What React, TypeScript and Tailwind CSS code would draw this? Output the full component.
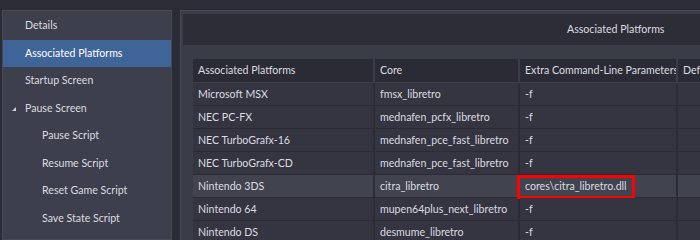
import React from 'react';

const sidebar = [
  { label: 'Details', indent: false },
  { label: 'Associated Platforms', indent: false, active: true },
  { label: 'Startup Screen', indent: false },
  { label: 'Pause Screen', indent: false, expanded: true },
  { label: 'Pause Script', indent: true },
  { label: 'Resume Script', indent: true },
  { label: 'Reset Game Script', indent: true },
  { label: 'Save State Script', indent: true },
];

const rows = [
  { platform: 'Microsoft MSX', core: 'fmsx_libretro', params: '-f' },
  { platform: 'NEC PC-FX', core: 'mednafen_pcfx_libretro', params: '-f' },
  { platform: 'NEC TurboGrafx-16', core: 'mednafen_pce_fast_libretro', params: '-f' },
  { platform: 'NEC TurboGrafx-CD', core: 'mednafen_pce_fast_libretro', params: '-f' },
  { platform: 'Nintendo 3DS', core: 'citra_libretro', params: 'cores\\citra_libretro.dll', marked: true },
  { platform: 'Nintendo 64', core: 'mupen64plus_next_libretro', params: '-f' },
  { platform: 'Nintendo DS', core: 'desmume_libretro', params: '-f' },
];

export default function App() {
  return (
    <div
      className="flex h-[240px] w-[700px] overflow-hidden bg-[#2b2c36] pt-[10px] pl-[2px] text-[10.6px] text-[#dcdce0]"
      style={{ fontFamily: 'Lato, "Open Sans", sans-serif' }}
    >
      {/* left nav */}
      <nav className="w-[170px] shrink-0 border border-[#474957] bg-[#3d3f4c] pt-[1px]">
        {sidebar.map((item) => (
          <div
            key={item.label}
            className={`relative flex h-[27.5px] items-center whitespace-nowrap pt-[1px] ${item.indent ? 'pl-[39px]' : 'pl-[22px]'} ${item.active ? 'bg-[#3f6598] text-white' : ''}`}
          >
            {item.expanded && (
              <span className="absolute left-[9px] top-[12px] h-0 w-0 border-b-[4px] border-l-[4px] border-b-[#cfd0d6] border-l-transparent" />
            )}
            {item.label}
          </div>
        ))}
      </nav>

      {/* main panel */}
      <main className="ml-[8px] flex-1 overflow-hidden border-t border-l border-[#474957] bg-[#3a3c48] pt-[3px] pl-[2px]">
        <div className="flex h-[31px] items-center bg-[#2c2d37] pl-[384px] whitespace-nowrap">
          Associated Platforms
        </div>
        <div className="mt-[14px] ml-[10px]">
          <div className="grid grid-cols-[182px_145px_158px_40px] whitespace-nowrap">
            {['Associated Platforms', 'Core', 'Extra Command-Line Parameters', 'Default'].map((h) => (
              <div
                key={h}
                className="flex h-[24px] items-center overflow-hidden border-r-2 border-b border-[#3a3c48] bg-[#2a2b35] pt-[1px] pl-[5px]"
              >
                {h}
              </div>
            ))}
            {rows.map((r) => {
              const bg = r.marked ? 'bg-[#41434f]' : 'bg-[#343541]';
              return (
                <React.Fragment key={r.platform}>
                  <div className={`flex h-[23px] items-center overflow-hidden border-r-2 border-b border-[#2b2c36] pt-[1px] pl-[5px] ${bg}`}>
                    {r.platform}
                  </div>
                  <div className={`flex h-[23px] items-center overflow-hidden border-r-2 border-b border-[#2b2c36] pt-[1px] pl-[5px] ${bg}`}>
                    {r.core}
                  </div>
                  <div className={`relative flex h-[23px] items-center border-r-2 border-b border-[#2b2c36] pt-[1px] pl-[5px] ${bg}`}>
                    {r.marked && (
                      <span className="absolute left-[-3px] top-0 h-[24px] w-[118px] border-[3px] border-[#ff0000]" />
                    )}
                    <span className="relative">{r.params}</span>
                  </div>
                  <div className={`h-[23px] border-b border-[#2b2c36] ${bg}`} />
                </React.Fragment>
              );
            })}
          </div>
        </div>
      </main>
    </div>
  );
}
